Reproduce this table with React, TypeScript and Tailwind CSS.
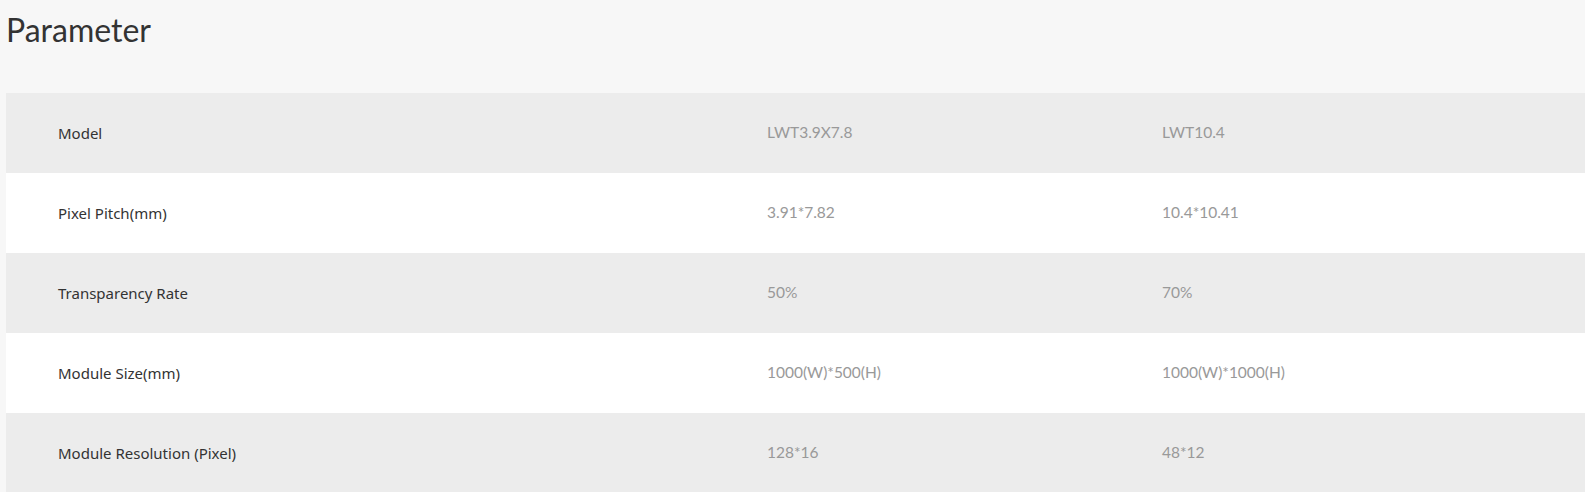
const rows = [
  { label: 'Model', a: 'LWT3.9X7.8', b: 'LWT10.4' },
  { label: 'Pixel Pitch(mm)', a: '3.91*7.82', b: '10.4*10.41' },
  { label: 'Transparency Rate', a: '50%', b: '70%' },
  { label: 'Module Size(mm)', a: '1000(W)*500(H)', b: '1000(W)*1000(H)' },
  { label: 'Module Resolution (Pixel)', a: '128*16', b: '48*12' },
]

const App = () => {
  return (
    <div className="min-h-screen bg-[#f7f7f7] pl-[6px]">
      <h2 className="pt-[10px] pb-[43px] text-[32px] leading-[40px] text-[#333] font-['Lato','Open_Sans',sans-serif]">
        Parameter
      </h2>
      <div className="flex flex-col">
        {rows.map((row, i) => (
          <div
            key={row.label}
            className={`grid grid-cols-[709px_395px_1fr] h-[80px] items-center ${i % 2 === 0 ? 'bg-[#ececec]' : 'bg-white'}`}
          >
            <div className="pl-[52px] text-[15px] text-[#333] font-['Noto_Sans','Open_Sans',sans-serif]">{row.label}</div>
            <div className="pl-[52px] text-[15.5px] text-[#999] font-['Lato','Liberation_Sans',sans-serif]">{row.a}</div>
            <div className="pl-[52px] text-[15.5px] text-[#999] font-['Lato','Liberation_Sans',sans-serif]">{row.b}</div>
          </div>
        ))}
      </div>
    </div>
  )
}

export default App
